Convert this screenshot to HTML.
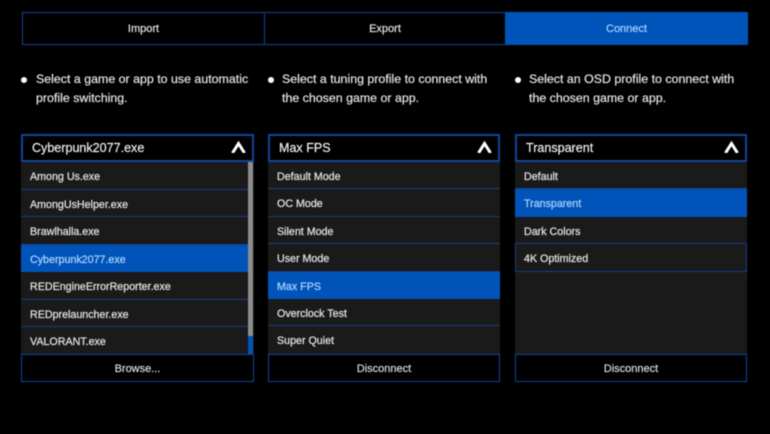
<!DOCTYPE html>
<html><head><meta charset="utf-8">
<style>
html,body{margin:0;padding:0;background:#000;}
#s{position:relative;width:770px;height:434px;overflow:hidden;background:#000;font-family:"Liberation Sans",sans-serif;color:#e4e4e4;filter:blur(.4px);}
#s div{position:absolute;box-sizing:border-box;white-space:nowrap;}
.tab{top:12px;height:33px;border:1px solid #12449a;font-size:11px;line-height:33px;text-align:center;-webkit-text-stroke:.2px currentColor;}
.dot{width:6px;height:6px;border-radius:50%;background:#fff;top:77px;}
.txt{font-size:12.4px;line-height:18.5px;top:70px;color:#e6e6e6;-webkit-text-stroke:.2px currentColor;}
.head{top:134px;height:28px;border:2px solid #12449a;background:#000;font-size:12.55px;line-height:24px;padding-left:9px;color:#eee;-webkit-text-stroke:.2px currentColor;}
.list{top:162px;height:192px;background:#1a1a1a;}
.row{left:0;height:27.4px;border-bottom:1px solid #15408a;font-size:10.7px;line-height:30px;padding-left:9px;color:#e2e2e2;-webkit-text-stroke:.25px currentColor;}
.c1 .row{line-height:30.6px;width:227px;}
.sel{background:#0053b8;color:#a9d2ff;border-bottom-color:#0053b8;}
.btn{top:354px;height:28px;border:1px solid #12449a;background:#000;font-size:11px;line-height:28px;text-align:center;color:#ddd;-webkit-text-stroke:.2px currentColor;}
svg{position:absolute;}
</style></head><body>
<div id="s">
<div class="tab" style="left:22px;width:243px;">Import</div>
<div class="tab" style="left:264px;width:242px;">Export</div>
<div class="tab" style="left:505px;width:243px;background:#0053b8;border-color:#0053b8;color:#a9d2ff;">Connect</div>

<div class="dot" style="left:21px;"></div>
<div class="txt" style="left:36px;">Select a game or app to use automatic<br>profile switching.</div>
<div class="dot" style="left:268px;"></div>
<div class="txt" style="left:282px;">Select a tuning profile to connect with<br>the chosen game or app.</div>
<div class="dot" style="left:515px;"></div>
<div class="txt" style="left:529px;">Select an OSD profile to connect with<br>the chosen game or app.</div>

<div class="head" style="left:21px;width:233px;">Cyberpunk2077.exe</div>
<svg style="left:231px;top:141px" width="15" height="12" viewBox="0 0 15 12"><path d="M1.5 12L7.5 2.5L13.5 12" fill="none" stroke="#fff" stroke-width="3"/></svg>
<div class="list c1" style="left:21px;width:233px;">
<div class="row" style="top:0;height:28px;">Among Us.exe</div>
<div class="row" style="top:28px;">AmongUsHelper.exe</div>
<div class="row" style="top:55.4px;">Brawlhalla.exe</div>
<div class="row sel" style="top:82.8px;">Cyberpunk2077.exe</div>
<div class="row" style="top:110.2px;">REDEngineErrorReporter.exe</div>
<div class="row" style="top:137.6px;">REDprelauncher.exe</div>
<div class="row" style="top:165px;border-bottom:0;">VALORANT.exe</div>
<div style="left:227px;top:0;width:5px;height:174px;background:#8d8d8d;"></div>
<div style="left:227px;top:174px;width:5px;height:18px;background:#0053b8;"></div>
</div>
<div class="btn" style="left:21px;width:233px;">Browse...</div>

<div class="head" style="left:268px;width:232px;">Max FPS</div>
<svg style="left:477px;top:141px" width="15" height="12" viewBox="0 0 15 12"><path d="M1.5 12L7.5 2.5L13.5 12" fill="none" stroke="#fff" stroke-width="3"/></svg>
<div class="list" style="left:268px;width:232px;">
<div class="row" style="top:0;width:232px;">Default Mode</div>
<div class="row" style="top:27.4px;width:232px;">OC Mode</div>
<div class="row" style="top:54.8px;width:232px;">Silent Mode</div>
<div class="row" style="top:82.2px;width:232px;">User Mode</div>
<div class="row sel" style="top:109.6px;width:232px;">Max FPS</div>
<div class="row" style="top:137px;width:232px;">Overclock Test</div>
<div class="row" style="top:164.4px;width:232px;border-bottom:0;">Super Quiet</div>
</div>
<div class="btn" style="left:268px;width:232px;">Disconnect</div>

<div class="head" style="left:515px;width:232px;">Transparent</div>
<svg style="left:724px;top:141px" width="15" height="12" viewBox="0 0 15 12"><path d="M1.5 12L7.5 2.5L13.5 12" fill="none" stroke="#fff" stroke-width="3"/></svg>
<div class="list" style="left:515px;width:232px;">
<div class="row" style="top:0;width:232px;">Default</div>
<div class="row sel" style="top:27.4px;width:232px;">Transparent</div>
<div class="row" style="top:54.8px;width:232px;">Dark Colors</div>
<div class="row" style="top:82.2px;width:232px;border:1px solid #15408a;border-top:0;padding-left:8px;">4K Optimized</div>
</div>
<div class="btn" style="left:515px;width:232px;">Disconnect</div>
</div>
</body></html>
